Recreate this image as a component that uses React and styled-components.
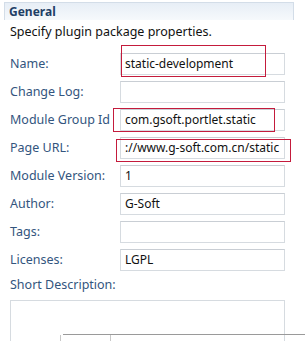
import React from "react";
import styled, { createGlobalStyle } from "styled-components";

const Global = createGlobalStyle`
  html, body { margin: 0; padding: 0; background: #fff; }
  body { font-family: "Noto Sans", "Open Sans", sans-serif; font-size: 12px; }
  * { box-sizing: border-box; }
`;

const Page = styled.div`
  position: relative;
  width: 305px;
  height: 341px;
  overflow: hidden;
  padding: 2px 0 0 4px;
`;

const Header = styled.div`
  width: 290px;
  height: 18px;
  border: 1px solid #d3dde8;
  border-bottom: none;
  background: linear-gradient(to bottom, #e7eef6, #f6f9fc);
  display: flex;
  align-items: center;
  padding-left: 4px;
  font-weight: 700;
  font-size: 12px;
  color: #1f3f66;
`;

const Desc = styled.div`
  margin: 3px 0 0 6px;
  height: 18px;
  line-height: 18px;
  font-size: 12.5px;
  color: #111;
`;

const Form = styled.div`
  display: grid;
  grid-template-columns: 110px 165px;
  row-gap: 6px;
  margin: 12px 0 0 6px;
  align-items: center;
`;

const Label = styled.div`
  color: #33557e;
  font-size: 12.5px;
  white-space: nowrap;
  height: 22px;
  line-height: 22px;
`;

const Field = styled.div`
  height: 22px;
  border: 1px solid #d6dbe0;
  border-top-color: #c9ced4;
  padding-left: 4px;
  line-height: 20px;
  color: #111;
  white-space: nowrap;
  overflow: hidden;
`;

const Wide = styled.div`
  grid-column: 1 / span 2;
  color: #33557e;
  font-size: 12.5px;
  height: 16px;
  line-height: 16px;
  margin-top: 0;
`;

const TextArea = styled.div`
  grid-column: 1 / span 2;
  height: 60px;
  border: 1px solid #d6dbe0;
  margin-top: 1px;
`;

const Mark = styled.div`
  position: absolute;
  border: 1px solid #c41b3c;
`;

const BottomBar = styled.div`
  position: absolute;
  left: 63px;
  right: 0;
  bottom: 3px;
  height: 4px;
  border-top: 1px solid #9a9a9a;
`;

const Tick = styled.div`
  position: absolute;
  bottom: 0;
  width: 1px;
  height: 6px;
  background: #c8c8c8;
`;

const rows = [
  ["Name:", "static-development"],
  ["Change Log:", ""],
  ["Module Group Id", "com.gsoft.portlet.static"],
  ["Page URL:", "://www.g-soft.com.cn/static"],
  ["Module Version:", "1"],
  ["Author:", "G-Soft"],
  ["Tags:", ""],
  ["Licenses:", "LGPL"],
];

export default function App() {
  return (
    <>
      <Global />
      <Page>
        <Header>General</Header>
        <Desc>Specify plugin package properties.</Desc>
        <Form>
          {rows.map(([l, v]) => (
            <React.Fragment key={l}>
              <Label>{l}</Label>
              <Field>{v}</Field>
            </React.Fragment>
          ))}
          <Wide>Short Description:</Wide>
          <TextArea />
        </Form>
        <Mark style={{ left: 121, top: 45, width: 145, height: 32 }} />
        <Mark style={{ left: 113, top: 108, width: 162, height: 24 }} />
        <Mark style={{ left: 116, top: 139, width: 175, height: 23 }} />
        <BottomBar />
        <Tick style={{ left: 60 }} />
        <Tick style={{ left: 110 }} />
      </Page>
    </>
  );
}
